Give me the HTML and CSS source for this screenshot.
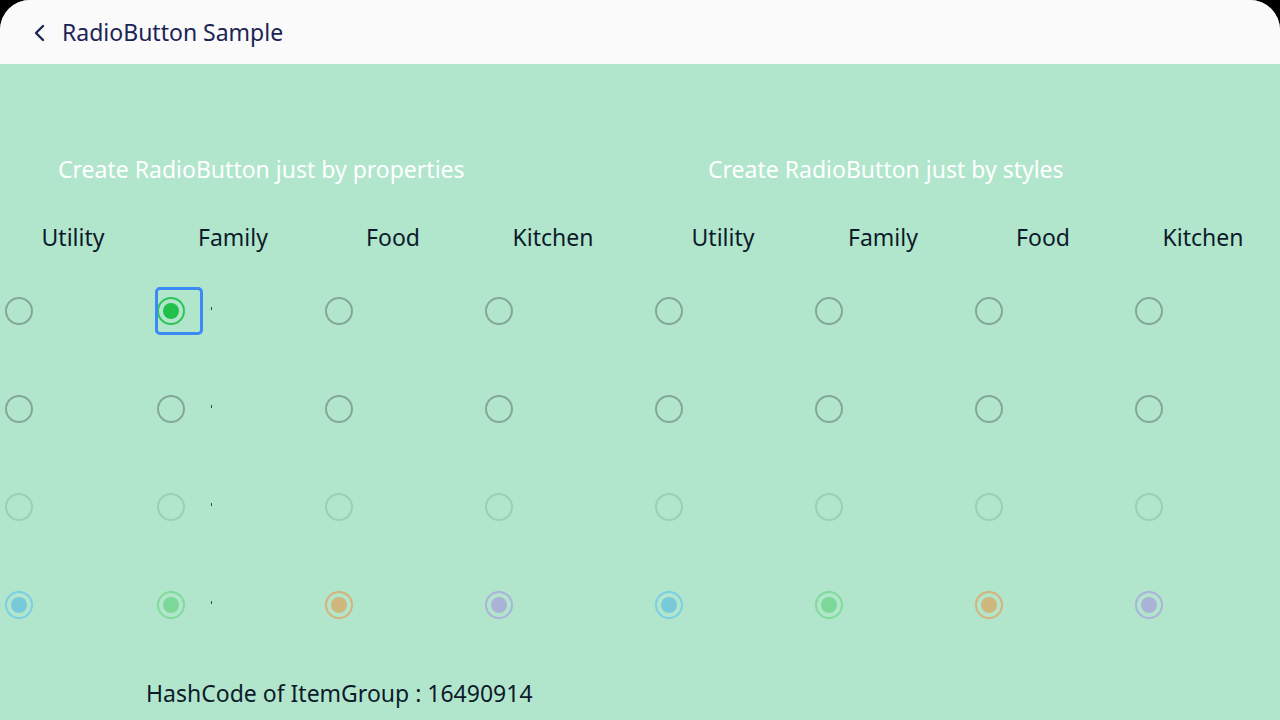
FILE: index.html
```html
<!DOCTYPE html>
<html>
<head>
<meta charset="utf-8">
<link rel="stylesheet" href="styles.css">
</head>
<body>
<div class="screen">
  <header class="header">
    <svg class="back" width="14" height="18" viewBox="0 0 14 18"><path d="M10 2 L3 9 L10 16" fill="none" stroke="#1b2454" stroke-width="2.4" stroke-linecap="round" stroke-linejoin="round"/></svg>
    <span class="title">RadioButton Sample</span>
  </header>
  <main class="main">
    <div class="halves">
      <section class="half half-left">
        <div class="caption">Create RadioButton just by properties</div>
        <div class="grid">
          <div class="label">Utility</div><div class="label">Family</div><div class="label">Food</div><div class="label">Kitchen</div>
          <div class="cell c0"><span class="radio"></span></div>
          <div class="cell c1"><span class="radio checked"><span class="focus"></span></span><span class="tick"></span></div>
          <div class="cell c2"><span class="radio"></span></div>
          <div class="cell c3"><span class="radio"></span></div>

          <div class="cell c0"><span class="radio"></span></div>
          <div class="cell c1"><span class="radio"></span><span class="tick"></span></div>
          <div class="cell c2"><span class="radio"></span></div>
          <div class="cell c3"><span class="radio"></span></div>

          <div class="cell c0"><span class="radio disabled"></span></div>
          <div class="cell c1"><span class="radio disabled"></span><span class="tick"></span></div>
          <div class="cell c2"><span class="radio disabled"></span></div>
          <div class="cell c3"><span class="radio disabled"></span></div>

          <div class="cell c0"><span class="radio sel blue"></span></div>
          <div class="cell c1"><span class="radio sel green"></span><span class="tick"></span></div>
          <div class="cell c2"><span class="radio sel orange"></span></div>
          <div class="cell c3"><span class="radio sel purple"></span></div>
        </div>
      </section>
      <section class="half half-right">
        <div class="caption">Create RadioButton just by styles</div>
        <div class="grid">
          <div class="label">Utility</div><div class="label">Family</div><div class="label">Food</div><div class="label">Kitchen</div>
          <div class="cell r"><span class="radio"></span></div>
          <div class="cell r"><span class="radio"></span></div>
          <div class="cell r"><span class="radio"></span></div>
          <div class="cell r"><span class="radio"></span></div>

          <div class="cell r"><span class="radio"></span></div>
          <div class="cell r"><span class="radio"></span></div>
          <div class="cell r"><span class="radio"></span></div>
          <div class="cell r"><span class="radio"></span></div>

          <div class="cell r"><span class="radio disabled"></span></div>
          <div class="cell r"><span class="radio disabled"></span></div>
          <div class="cell r"><span class="radio disabled"></span></div>
          <div class="cell r"><span class="radio disabled"></span></div>

          <div class="cell r"><span class="radio sel blue"></span></div>
          <div class="cell r"><span class="radio sel green"></span></div>
          <div class="cell r"><span class="radio sel orange"></span></div>
          <div class="cell r"><span class="radio sel purple"></span></div>
        </div>
      </section>
    </div>
    <div class="hash">HashCode of ItemGroup : 16490914</div>
  </main>
</div>
</body>
</html>
```

FILE: styles.css
```css
html, body {
  margin: 0;
  padding: 0;
  background: #000;
}
body {
  width: 1280px;
  height: 720px;
  overflow: hidden;
  font-family: "Noto Sans", "Open Sans", sans-serif;
}
.screen {
  width: 1280px;
  height: 720px;
  background: #b1e6cd;
  border-radius: 30px 30px 0 0;
  overflow: hidden;
}
.header {
  height: 64px;
  background: #fafafa;
  display: flex;
  align-items: center;
  padding-left: 33px;
  box-sizing: border-box;
}
.back {
  display: block;
  margin-top: 1px;
}
.title {
  margin-left: 15px;
  font-size: 23px;
  color: #1b2454;
  line-height: 32px;
}
.main {
  padding-top: 89px;
}
.halves {
  display: flex;
}
.half {
  width: 640px;
}
.caption {
  color: #ffffff;
  font-size: 23px;
  line-height: 32px;
  height: 32px;
  white-space: nowrap;
}
.half-left .caption { padding-left: 58px; }
.half-right .caption { padding-left: 68px; }
.grid {
  margin-top: 36px;
  display: grid;
  grid-template-columns: repeat(4, 160px);
  grid-template-rows: 41px repeat(4, 98px);
}
.label {
  align-self: start;
  width: 146px;
  text-align: center;
  font-size: 23px;
  line-height: 32px;
  color: #0d1a2a;
}
.half-right .label { width: 166px; }
.cell {
  display: flex;
  align-items: center;
  position: relative;
}
.c0 .radio, .c2 .radio, .c3 .radio { margin-left: 5px; }
.c1 .radio { margin-left: -3px; }
.r .radio { margin-left: 15px; }
.radio {
  position: relative;
  width: 28px;
  height: 28px;
  box-sizing: border-box;
  border: 2px solid #84a897;
  border-radius: 50%;
  flex: none;
}
.radio.disabled {
  border-color: #9bd0b6;
}
.radio.checked {
  border-color: #2ec557;
}
.radio.checked::after,
.radio.sel::after {
  content: "";
  position: absolute;
  left: 4px;
  top: 4px;
  width: 16px;
  height: 16px;
  border-radius: 50%;
  background: #22c049;
}
.radio.blue { border-color: #7acfe2; }
.radio.blue::after { background: #78c9d9; }
.radio.green { border-color: #80db99; }
.radio.green::after { background: #7cd896; }
.radio.orange { border-color: #d8b27c; }
.radio.orange::after { background: #ceb67c; }
.radio.purple { border-color: #abb3da; }
.radio.purple::after { background: #aab2d6; }
.focus {
  position: absolute;
  left: -4px;
  top: -12px;
  width: 48px;
  height: 48px;
  box-sizing: border-box;
  border: 3px solid #3b8af5;
  border-radius: 5px;
}
.tick {
  position: absolute;
  left: 51px;
  top: 45px;
  width: 1px;
  height: 3px;
  background: #2a4a3c;
}
.hash {
  margin-top: 23px;
  padding-left: 146px;
  font-size: 23px;
  line-height: 32px;
  color: #0d1a2a;
}
```
